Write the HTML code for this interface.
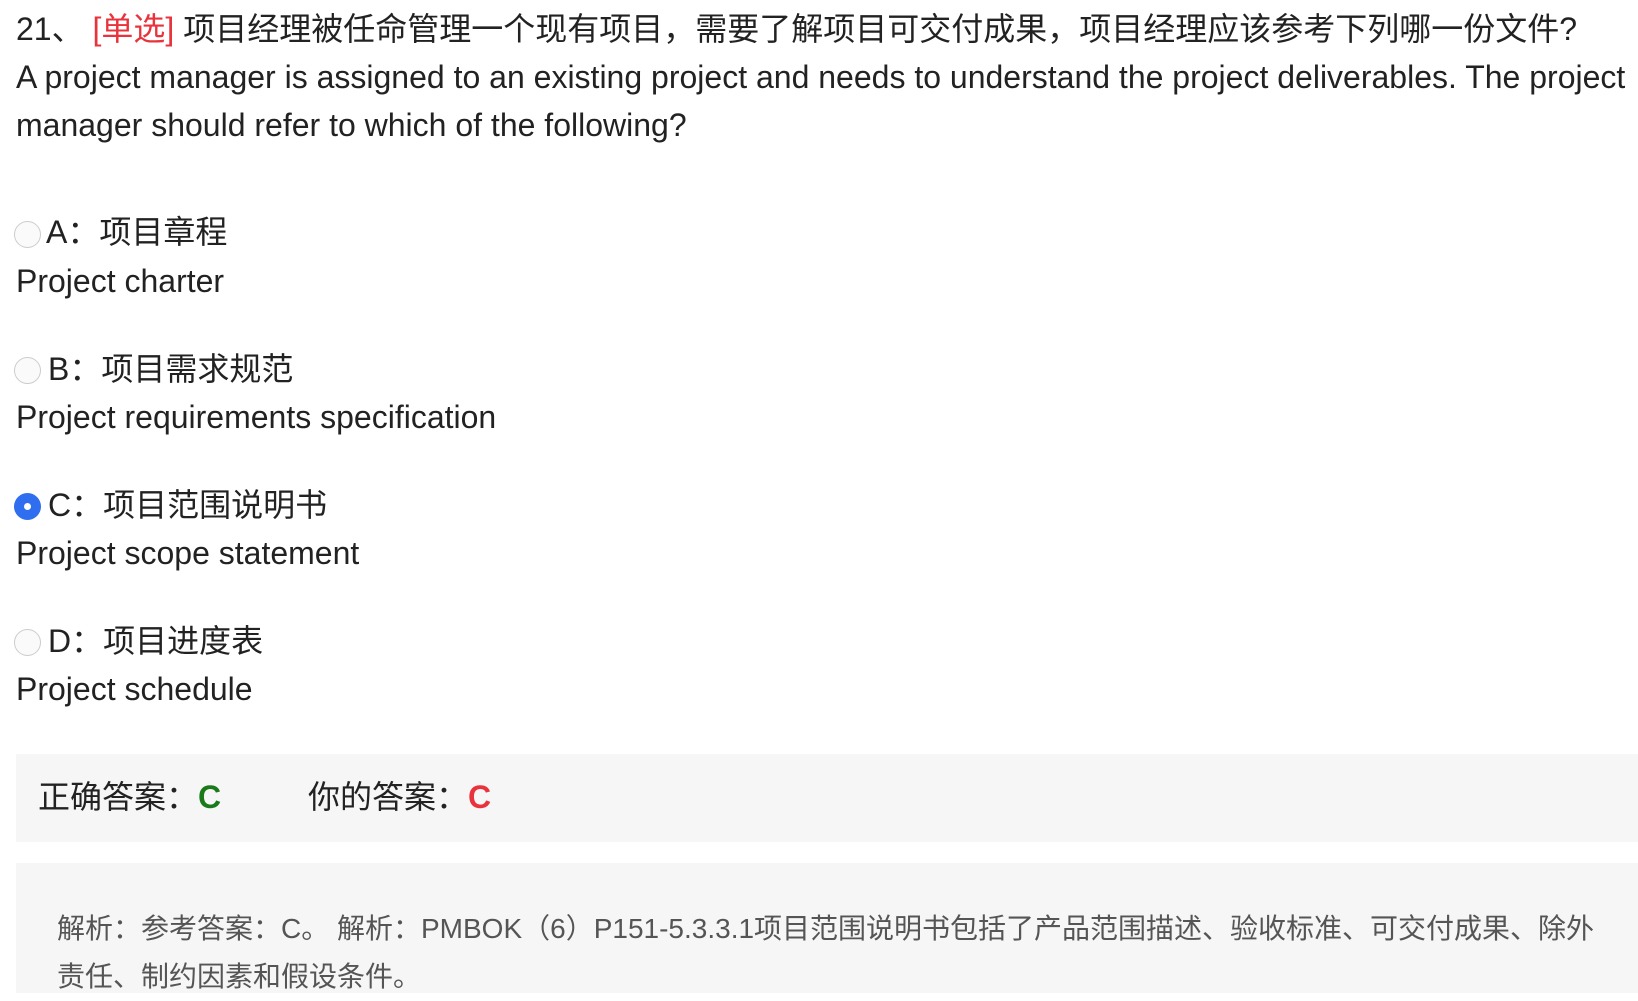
<!DOCTYPE html>
<html><head><meta charset="utf-8"><style>
body{margin:0;width:1638px;height:988px;overflow:hidden;background:#fff;font-family:"Liberation Sans","Noto Sans CJK SC",sans-serif;color:#222;}
.t{position:absolute;left:16px;white-space:nowrap;font-size:32px;line-height:48px;}
.radio{position:absolute;left:14px;width:27px;height:27px;border-radius:50%;border:1px solid #ccc;background:#fafafa;box-sizing:border-box;}
.radio.on{background:#2f6fef;border:none;}
.radio.on::after{content:"";position:absolute;left:10px;top:10px;width:7px;height:7px;border-radius:50%;background:#fff;}
.box{position:absolute;left:16px;right:0;background:#f6f6f6;}
</style></head><body>
<div class="t" style="top:5px">21、 <span style="color:#e8333c">[单选]</span> 项目经理被任命管理一个现有项目，需要了解项目可交付成果，项目经理应该参考下列哪一份文件?</div>
<div class="t" style="top:53px">A project manager is assigned to an existing project and needs to understand the project deliverables. The project</div>
<div class="t" style="top:101px">manager should refer to which of the following?</div>

<div class="radio" style="top:221px"></div>
<div class="t" style="top:208px;left:46px">A：项目章程</div>
<div class="t" style="top:257px">Project charter</div>

<div class="radio" style="top:357px"></div>
<div class="t" style="top:345px;left:48px">B：项目需求规范</div>
<div class="t" style="top:393px">Project requirements specification</div>

<div class="radio on" style="top:493px"></div>
<div class="t" style="top:481px;left:48px">C：项目范围说明书</div>
<div class="t" style="top:529px">Project scope statement</div>

<div class="radio" style="top:629px"></div>
<div class="t" style="top:617px;left:48px">D：项目进度表</div>
<div class="t" style="top:665px">Project schedule</div>

<div class="box" style="top:754px;height:88px"></div>
<div class="t" style="top:773px;left:38px">正确答案：<b style="color:#1a7a1a">C</b></div>
<div class="t" style="top:773px;left:308px">你的答案：<b style="color:#e8333c">C</b></div>

<div class="box" style="top:863px;height:130px"></div>
<div class="t" style="top:905px;left:57px;font-size:28px;line-height:48px;color:#555">解析：参考答案：C。 解析：PMBOK（6）P151-5.3.3.1项目范围说明书包括了产品范围描述、验收标准、可交付成果、除外<br>责任、制约因素和假设条件。</div>
</body></html>
